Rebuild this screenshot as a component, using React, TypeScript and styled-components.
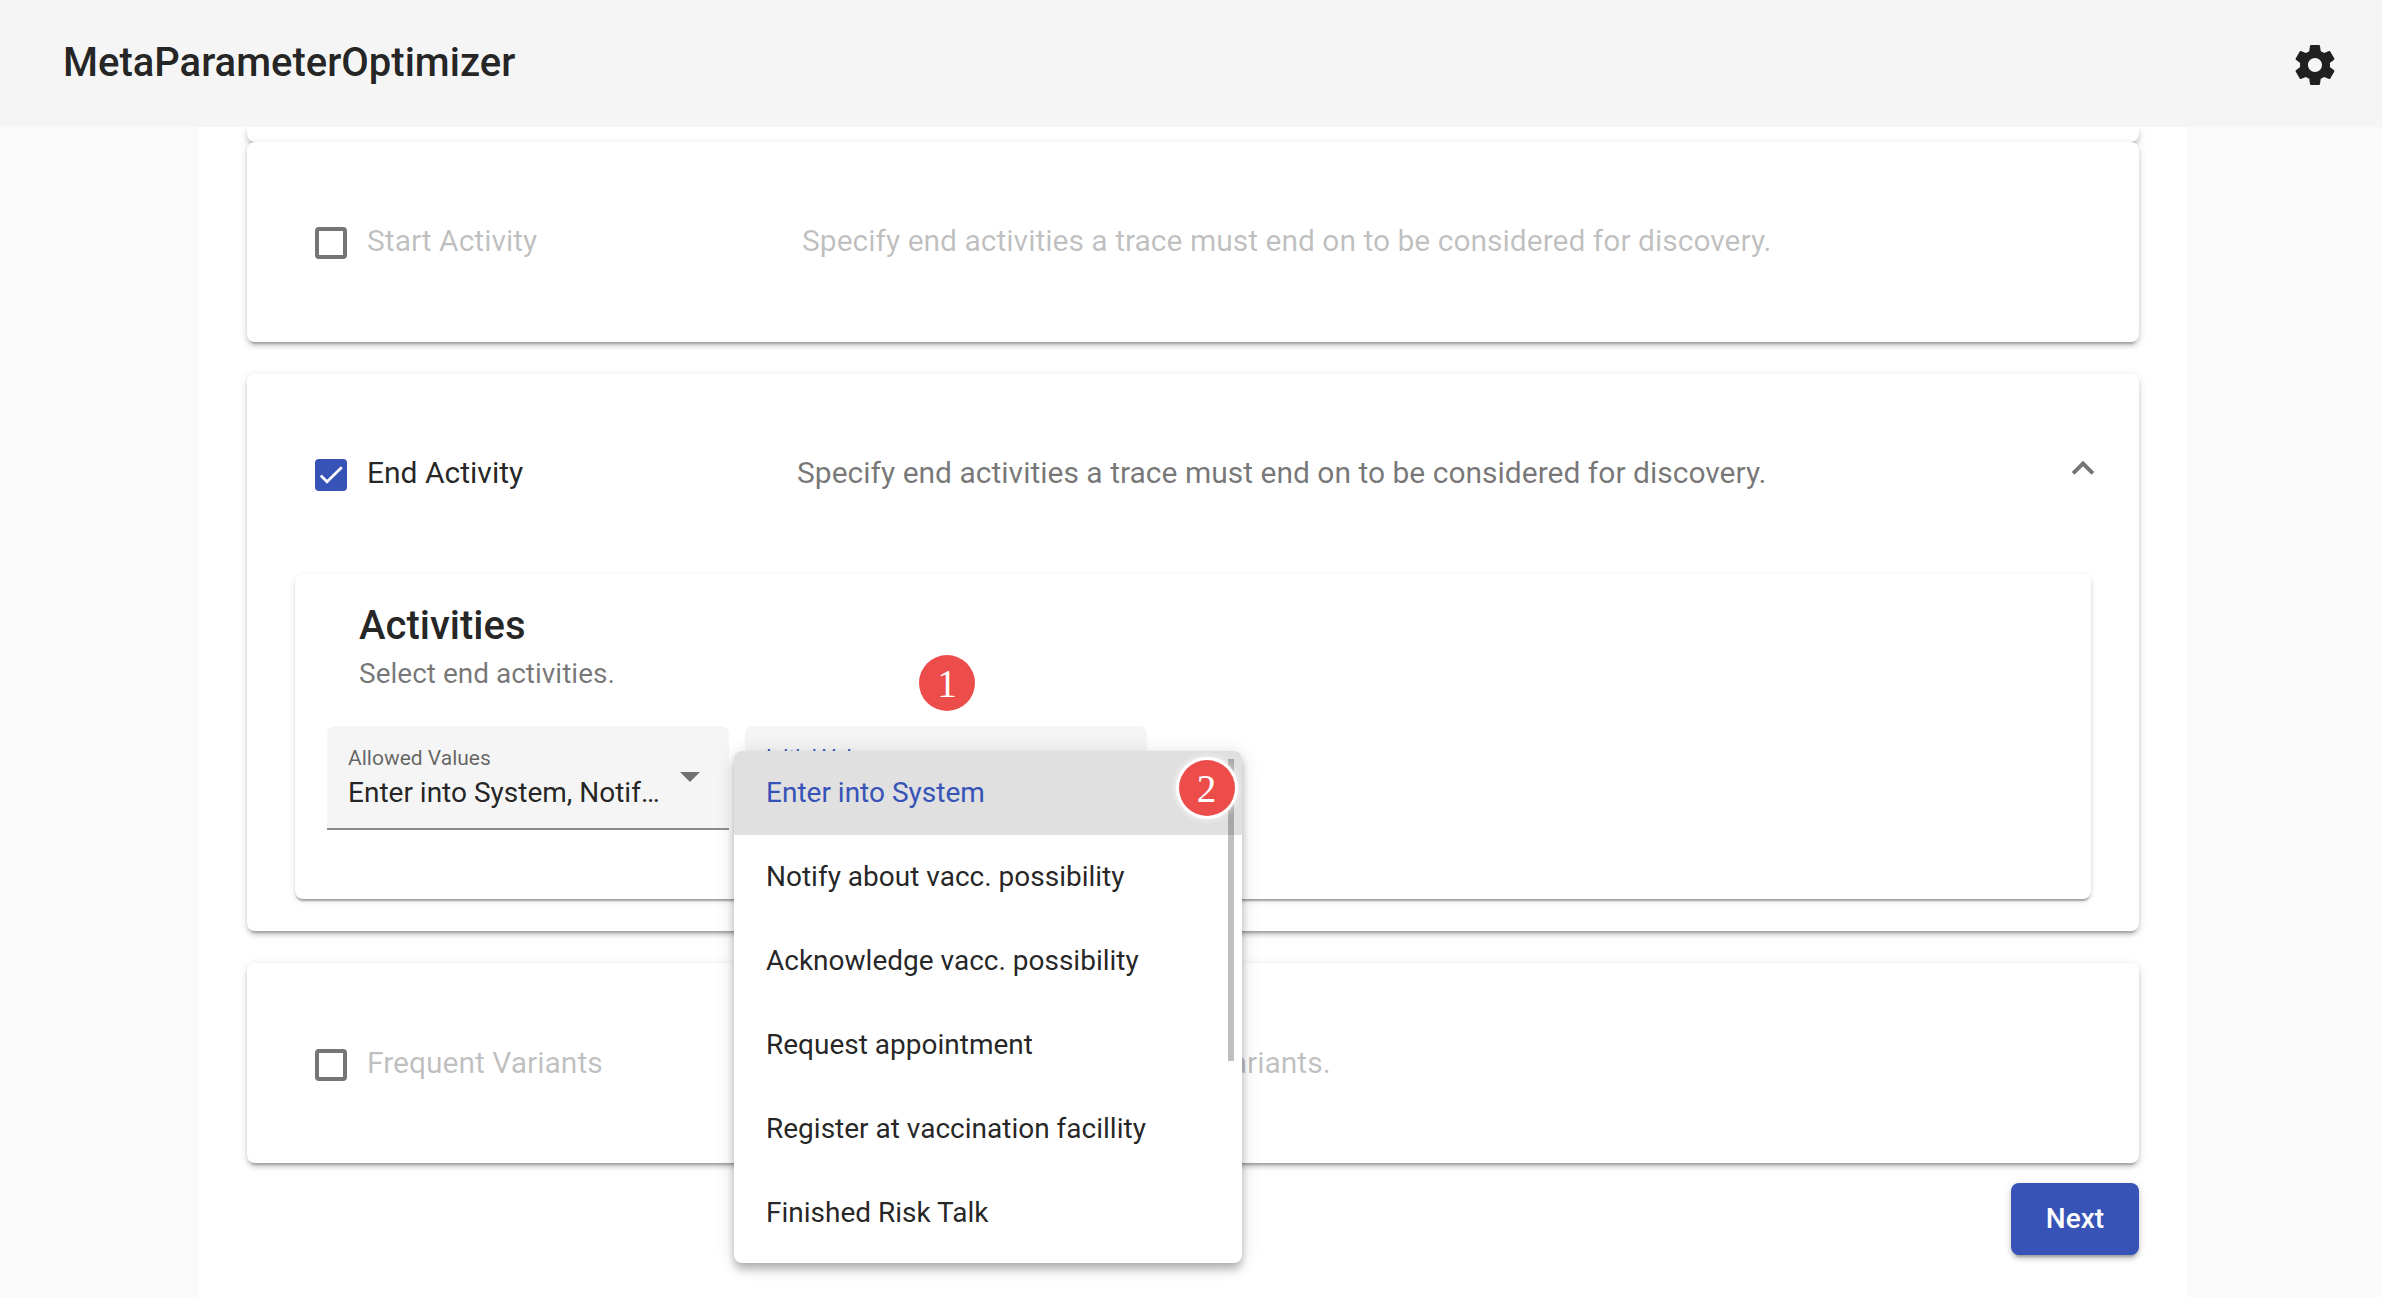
import React from "react";
import styled, { createGlobalStyle, css } from "styled-components";

const Global = createGlobalStyle`
  *, *::before, *::after { box-sizing: border-box; }
  html, body { margin: 0; height: 100%; overflow: hidden; }
  body { background: #fafafa; color: rgba(0, 0, 0, 0.87); font-family: Roboto, sans-serif; }
`;

const Page = styled.div`
  display: flex;
  flex-direction: column;
  height: 1297px;
  overflow: hidden;
`;

const Toolbar = styled.header`
  flex: none;
  display: flex;
  align-items: center;
  justify-content: space-between;
  height: 127px;
  padding: 0 43px 0 63px;
  background: #f5f5f5;
`;

const AppTitle = styled.h1`
  margin: 0;
  padding-bottom: 1px;
  font-size: 40px;
  line-height: 64px;
  font-weight: 500;
`;

const SettingsButton = styled.button`
  display: flex;
  margin-top: 3px;
  padding: 0;
  border: 0;
  background: none;
  color: rgba(0, 0, 0, 0.87);
`;

const Scroller = styled.main`
  flex: 1;
  min-height: 0;
  overflow: hidden;
  padding: 0 195px 0 199px;
`;

const Content = styled.div`
  display: flex;
  flex-direction: column;
  height: 100%;
  padding: 0 48px;
  background: #fff;
`;

const Panel = styled.section<{ $height: number; $gap: number }>`
  flex: none;
  height: ${(p) => p.$height}px;
  margin-bottom: ${(p) => p.$gap}px;
  border-radius: 8px;
  background: #fff;
  box-shadow: 0 6px 2px -4px rgba(0, 0, 0, 0.2), 0 4px 4px 0 rgba(0, 0, 0, 0.14),
    0 2px 10px 0 rgba(0, 0, 0, 0.12);
`;

const PreviousPanel = styled(Panel)`
  border-radius: 0 0 8px 8px;
`;

const PanelHeader = styled.div<{ $shift: number }>`
  display: flex;
  align-items: center;
  height: 200px;
  padding: ${(p) => p.$shift * 2}px 45px 0 68px;
  font-size: 30px;
  line-height: 40px;
`;

const CheckboxBox = styled.span<{ $checked: boolean }>`
  flex: none;
  display: flex;
  align-items: center;
  justify-content: center;
  width: 32px;
  height: 32px;
  margin: 2px 20px 0 0;
  border-radius: 4px;
  ${(p) =>
    p.$checked
      ? css`
          background: #3753b7;
        `
      : css`
          border: 4px solid #757575;
        `}
`;

const PanelTitle = styled.div<{ $disabled: boolean; $width: number }>`
  flex: none;
  width: ${(p) => p.$width}px;
  padding-bottom: 2px;
  color: ${(p) => (p.$disabled ? "rgba(0, 0, 0, 0.26)" : "rgba(0, 0, 0, 0.87)")};
`;

const PanelDescription = styled.div<{ $disabled: boolean }>`
  flex: 1;
  padding-bottom: 2px;
  white-space: nowrap;
  color: ${(p) => (p.$disabled ? "rgba(0, 0, 0, 0.26)" : "rgba(0, 0, 0, 0.54)")};
`;

const Chevron = styled.span`
  width: 16px;
  height: 16px;
  margin: 0 3px 5px 0;
  border: solid rgba(0, 0, 0, 0.54);
  border-width: 0 4px 4px 0;
  transform: rotate(225deg);
`;

const ActivitiesCard = styled.div`
  height: 325px;
  margin: 0 48px;
  padding: 32px;
  border-radius: 8px;
  background: #fff;
  box-shadow: 0 4px 2px -2px rgba(0, 0, 0, 0.2), 0 2px 2px 0 rgba(0, 0, 0, 0.14),
    0 2px 6px 0 rgba(0, 0, 0, 0.12);
`;

const CardTitle = styled.h2`
  margin: 0 0 0 32px;
  font-size: 40px;
  line-height: 40px;
  font-weight: 500;
`;

const CardSubtitle = styled.p`
  margin: 8px 0 32px 32px;
  font-size: 28px;
  line-height: 40px;
  color: rgba(0, 0, 0, 0.54);
`;

const Fields = styled.div`
  display: flex;
  gap: 16px;
`;

const Field = styled.div`
  position: relative;
  display: flex;
  align-items: center;
  width: 402px;
  height: 104px;
  padding: 0 29px 0 21px;
  border-bottom: 2px solid #8c8c8c;
  border-radius: 8px 8px 0 0;
  background: #f5f5f5;
`;

const FieldText = styled.div`
  display: flex;
  flex-direction: column;
  width: 318px;
`;

const FieldLabel = styled.span<{ $focused?: boolean }>`
  margin: ${(p) => (p.$focused ? "-1px 0 1px" : "0")};
  font-size: 21px;
  line-height: 30px;
  color: ${(p) => (p.$focused ? "#3753b7" : "rgba(0, 0, 0, 0.6)")};
`;

const FieldValue = styled.span`
  height: 36px;
  margin-top: 2px;
  font-size: 28px;
  line-height: 36px;
  overflow: hidden;
  white-space: nowrap;
  text-overflow: ellipsis;
`;

const SelectArrow = styled.span`
  margin: 0 0 0 14px;
  border: solid transparent;
  border-width: 10px 10px 0;
  border-top-color: rgba(0, 0, 0, 0.54);
`;

const Menu = styled.ul`
  position: absolute;
  z-index: 2;
  left: -11px;
  top: 25px;
  width: 508px;
  height: 512px;
  margin: 0;
  padding: 0;
  border-radius: 8px;
  list-style: none;
  background: #fff;
  box-shadow: 0 4px 8px -2px rgba(0, 0, 0, 0.2), 0 8px 10px 0 rgba(0, 0, 0, 0.14),
    0 2px 20px 0 rgba(0, 0, 0, 0.12);
`;

const Option = styled.li<{ $selected: boolean }>`
  height: 84px;
  padding: 0 32px;
  font-size: 28px;
  line-height: 84px;
  white-space: nowrap;
  ${(p) =>
    p.$selected &&
    css`
      border-radius: 8px 8px 0 0;
      background: #e0e0e0;
      color: #3753b7;
    `}
`;

const ScrollThumb = styled.span`
  position: absolute;
  top: 8px;
  right: 8px;
  width: 6px;
  height: 302px;
  background: rgba(0, 0, 0, 0.25);
`;

const Badge = styled.span<{ $left: number; $top: number }>`
  position: absolute;
  z-index: 3;
  left: ${(p) => p.$left}px;
  top: ${(p) => p.$top}px;
  width: 56px;
  height: 56px;
  border-radius: 50%;
  background: #ec4d4a;
  box-shadow: 0 0 0 3px #fff, 0 0 6px 3px rgba(255, 255, 255, 0.8);
  color: #fff;
  font-family: "Liberation Serif", serif;
  font-size: 39px;
  line-height: 57px;
  text-align: center;
`;

const Actions = styled.div`
  display: flex;
  justify-content: flex-end;
`;

const NextButton = styled.button`
  width: 128px;
  height: 72px;
  padding: 0;
  border: 0;
  border-radius: 8px;
  background: #3753b7;
  color: #fff;
  font: 500 28px/72px Roboto, sans-serif;
  box-shadow: 0 6px 2px -4px rgba(0, 0, 0, 0.2), 0 4px 4px 0 rgba(0, 0, 0, 0.14),
    0 2px 10px 0 rgba(0, 0, 0, 0.12);
`;

const activities = [
  "Enter into System",
  "Notify about vacc. possibility",
  "Acknowledge vacc. possibility",
  "Request appointment",
  "Register at vaccination facillity",
  "Finished Risk Talk",
];

function Checkbox({ checked }: { checked: boolean }) {
  return (
    <CheckboxBox $checked={checked}>
      {checked && (
        <svg width="32" height="32" viewBox="0 0 24 24" fill="none" stroke="#fff" strokeWidth="2">
          <path d="M4.3 12.4 9 17.1 20.1 6.2" />
        </svg>
      )}
    </CheckboxBox>
  );
}

type HeaderProps = {
  title: string;
  description: string;
  checked?: boolean;
  titleWidth: number;
  shift?: number;
};

function FilterHeader({ title, description, checked = false, titleWidth, shift = 0 }: HeaderProps) {
  return (
    <PanelHeader $shift={shift}>
      <Checkbox checked={checked} />
      <PanelTitle $disabled={!checked} $width={titleWidth}>
        {title}
      </PanelTitle>
      <PanelDescription $disabled={!checked}>{description}</PanelDescription>
      {checked && <Chevron />}
    </PanelHeader>
  );
}

export default function App() {
  return (
    <Page>
      <Global />
      <Toolbar>
        <AppTitle>MetaParameterOptimizer</AppTitle>
        <SettingsButton aria-label="Settings">
          <svg width="48" height="48" viewBox="0 0 24 24" fill="currentColor">
            <path d="M19.43 12.98c.04-.32.07-.64.07-.98s-.03-.66-.07-.98l2.11-1.65c.19-.15.24-.42.12-.64l-2-3.46c-.12-.22-.39-.3-.61-.22l-2.49 1c-.52-.4-1.08-.73-1.69-.98l-.38-2.65C14.46 2.18 14.25 2 14 2h-4c-.25 0-.46.18-.49.42l-.38 2.65c-.61.25-1.17.59-1.69.98l-2.49-1c-.23-.09-.49 0-.61.22l-2 3.46c-.13.22-.07.49.12.64l2.11 1.65c-.04.32-.07.65-.07.98s.03.66.07.98l-2.11 1.65c-.19.15-.24.42-.12.64l2 3.46c.12.22.39.3.61.22l2.49-1c.52.4 1.08.73 1.69.98l.38 2.65c.03.24.24.42.49.42h4c.25 0 .46-.18.49-.42l.38-2.65c.61-.25 1.17-.59 1.69-.98l2.49 1c.23.09.49 0 .61-.22l2-3.46c.12-.22.07-.49-.12-.64l-2.11-1.65zM12 15.5c-1.93 0-3.5-1.57-3.5-3.5s1.57-3.5 3.5-3.5 3.5 1.57 3.5 3.5-1.57 3.5-3.5 3.5z" />
          </svg>
        </SettingsButton>
      </Toolbar>
      <Scroller>
        <Content>
          <PreviousPanel $height={15} $gap={0} />
          <Panel $height={200} $gap={32}>
            <FilterHeader
              title="Start Activity"
              description="Specify end activities a trace must end on to be considered for discovery."
              titleWidth={435}
            />
          </Panel>
          <Panel $height={557} $gap={32}>
            <FilterHeader
              title="End Activity"
              description="Specify end activities a trace must end on to be considered for discovery."
              titleWidth={430}
              checked
            />
            <ActivitiesCard>
              <CardTitle>Activities</CardTitle>
              <CardSubtitle>Select end activities.</CardSubtitle>
              <Fields>
                <Field>
                  <FieldText>
                    <FieldLabel>Allowed Values</FieldLabel>
                    <FieldValue>Enter into System, Notify about vacc. possibility</FieldValue>
                  </FieldText>
                  <SelectArrow />
                </Field>
                <Field>
                  <FieldText>
                    <FieldLabel $focused>Initial Values</FieldLabel>
                    <FieldValue />
                  </FieldText>
                  <Badge $left={174} $top={-71}>1</Badge>
                  <Menu>
                    {activities.map((name, i) => (
                      <Option key={name} $selected={i === 0}>
                        {name}
                      </Option>
                    ))}
                    <ScrollThumb />
                  </Menu>
                  <Badge $left={433.5} $top={34}>2</Badge>
                </Field>
              </Fields>
            </ActivitiesCard>
          </Panel>
          <Panel $height={200} $gap={20}>
            <FilterHeader
              title="Frequent Variants"
              description="Specify how to detect frequent variants."
              titleWidth={435}
              shift={1}
            />
          </Panel>
          <Actions>
            <NextButton>Next</NextButton>
          </Actions>
        </Content>
      </Scroller>
    </Page>
  );
}
